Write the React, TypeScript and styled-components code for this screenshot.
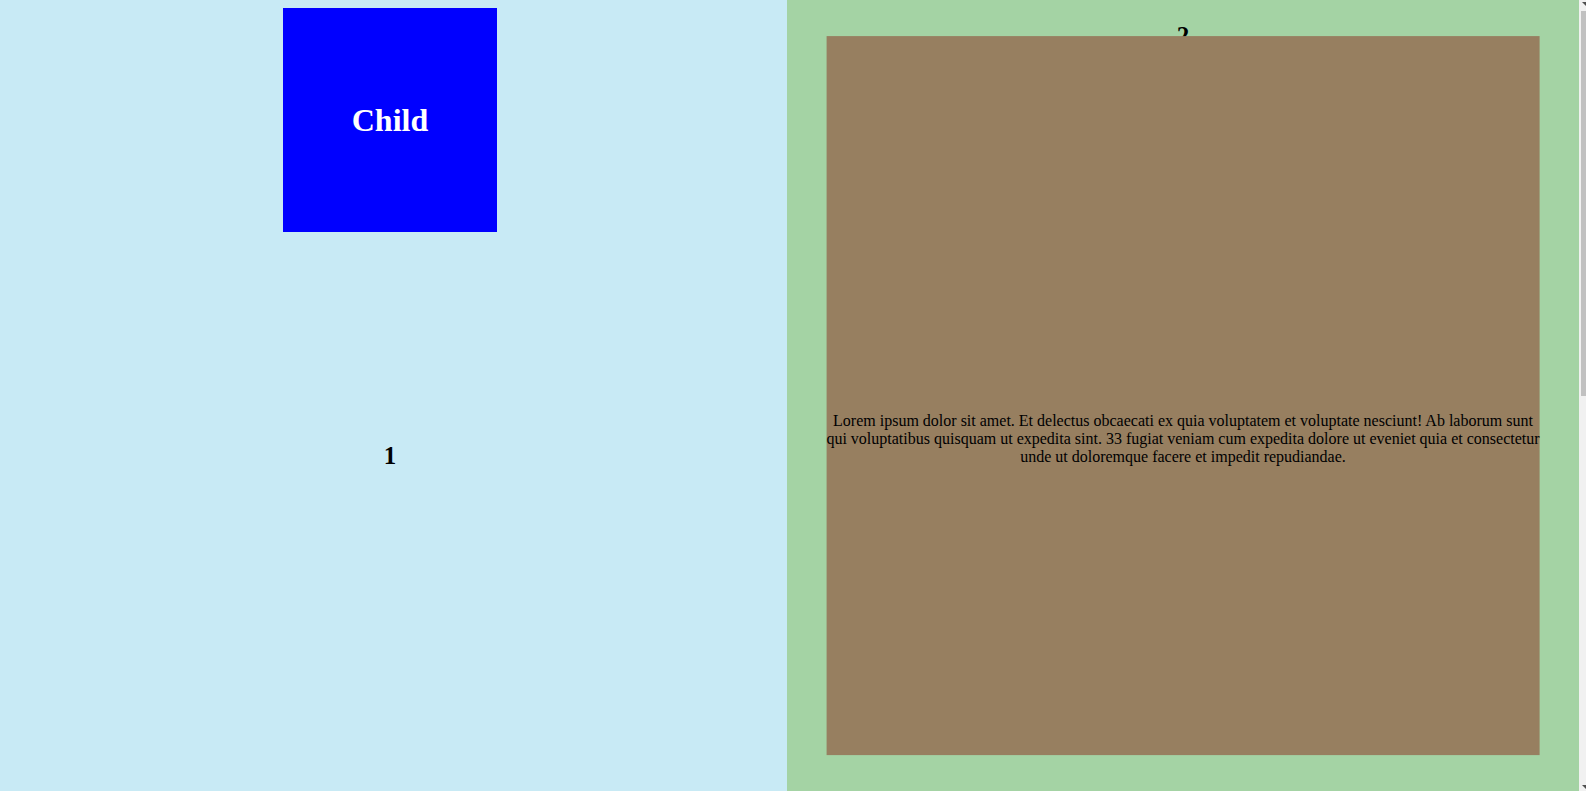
import React from "react";
import styled, { createGlobalStyle } from "styled-components";

const GlobalStyle = createGlobalStyle`
  html,
  body {
    margin: 0;
    padding: 0;
    font-family: "Liberation Serif", "Times New Roman", serif;
  }
`;

const Page = styled.main`
  display: grid;
  grid-template-columns: 787px 1fr;
  height: 100vh;
  margin-right: 7px;
`;

const Panel = styled.section<{ $bg: string }>`
  position: relative;
  display: flex;
  flex-direction: column;
  align-items: center;
  background-color: ${(p) => p.$bg};
  overflow: hidden;
`;

const LeftPanel = styled(Panel)`
  padding-right: 7px;
`;

const ChildBox = styled.div`
  width: 214px;
  height: 224px;
  margin-top: 8px;
  display: flex;
  align-items: center;
  justify-content: center;
  background-color: #0000ff;
  color: #ffffff;
`;

const ChildTitle = styled.h1`
  margin: 0;
  font-size: 32px;
  font-weight: bold;
`;

const Label = styled.h2<{ $top: number }>`
  margin: ${(p) => p.$top}px 0 0;
  font-size: 25px;
  font-weight: bold;
  color: #000;
`;

const Overlay = styled.div`
  position: absolute;
  top: 50%;
  left: 50%;
  transform: translate(-50%, -50%);
  width: 90%;
  height: 91%;
  box-sizing: border-box;
  padding-top: 88px;
  display: flex;
  align-items: center;
  justify-content: center;
  background-color: #977f60;
`;

const OverlayText = styled.p`
  margin: 0 -4px;
  font-size: 16px;
  text-align: center;
  color: #000;
`;

// the browser scrollbar, cut at the window edge
const ScrollTrack = styled.div`
  position: fixed;
  top: 0;
  right: 0;
  width: 7px;
  height: 100vh;
  background-color: #f1f1f1;
`;

const ScrollThumb = styled.div`
  position: absolute;
  top: 11px;
  left: 2px;
  right: 0;
  height: 385px;
  background-color: #c1c1c1;
`;

const ScrollArrow = styled.div<{ $down?: boolean }>`
  position: absolute;
  right: 0;
  ${(p) => (p.$down ? "bottom: 2px;" : "top: 2px;")}
  width: 0;
  height: 0;
  border-right: 4px solid #505050;
  ${(p) => (p.$down ? "border-bottom" : "border-top")}: 4px solid transparent;
  transform: ${(p) => (p.$down ? "none" : "scaleY(-1)")};
`;

const App: React.FC = () => {
  return (
    <>
      <GlobalStyle />
      <Page>
        <LeftPanel $bg="#c8eaf5">
          <ChildBox>
            <ChildTitle>Child</ChildTitle>
          </ChildBox>
          <Label $top={210}>1</Label>
        </LeftPanel>

        <Panel $bg="#a4d3a4">
          <Label $top={22}>2</Label>
          <Overlay>
            <OverlayText>
              Lorem ipsum dolor sit amet. Et delectus obcaecati ex quia voluptatem et voluptate nesciunt! Ab laborum sunt
              qui voluptatibus quisquam ut expedita sint. 33 fugiat veniam cum expedita dolore ut eveniet quia et
              consectetur unde ut doloremque facere et impedit repudiandae.
            </OverlayText>
          </Overlay>
        </Panel>
      </Page>
      <ScrollTrack>
        <ScrollArrow />
        <ScrollThumb />
        <ScrollArrow $down />
      </ScrollTrack>
    </>
  );
};

export default App;
